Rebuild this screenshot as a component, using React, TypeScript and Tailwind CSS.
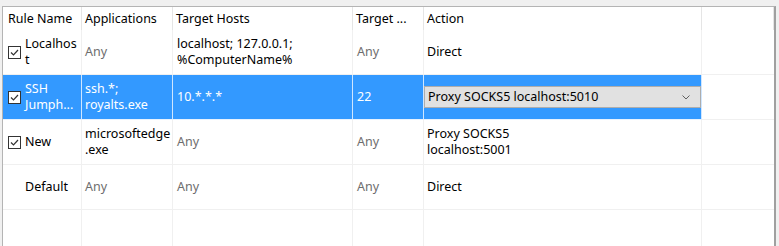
import React from "react";

const font = { fontFamily: '"Noto Sans", "Open Sans", sans-serif' };

function Check({ checked }: { checked: boolean }) {
  if (!checked) return <div className="w-[13px] h-[13px] shrink-0" />;
  return (
    <div className="w-[13px] h-[13px] shrink-0 border border-[#333333] bg-white flex items-center justify-center">
      <svg width="11" height="11" viewBox="0 0 11 11">
        <path d="M2 5.5 L4.5 8 L9 3" fill="none" stroke="#333" strokeWidth="1.2" />
      </svg>
    </div>
  );
}

type Cell = { lines: string[]; gray?: boolean };
type Row = {
  checked: boolean | null;
  name: string[];
  apps: Cell;
  hosts: Cell;
  port: Cell;
  action: Cell | "combo";
  selected?: boolean;
};

const rows: Row[] = [
  {
    checked: true,
    name: ["Localhos", "t"],
    apps: { lines: ["Any"], gray: true },
    hosts: { lines: ["localhost; 127.0.0.1;", "%ComputerName%"] },
    port: { lines: ["Any"], gray: true },
    action: { lines: ["Direct"] },
  },
  {
    checked: true,
    name: ["SSH", "Jumph..."],
    apps: { lines: ["ssh.*;", "royalts.exe"] },
    hosts: { lines: ["10.*.*.*"] },
    port: { lines: ["22"] },
    action: "combo",
    selected: true,
  },
  {
    checked: true,
    name: ["New"],
    apps: { lines: ["microsoftedge", ".exe"] },
    hosts: { lines: ["Any"], gray: true },
    port: { lines: ["Any"], gray: true },
    action: { lines: ["Proxy SOCKS5", "localhost:5001"] },
  },
  {
    checked: false,
    name: ["Default"],
    apps: { lines: ["Any"], gray: true },
    hosts: { lines: ["Any"], gray: true },
    port: { lines: ["Any"], gray: true },
    action: { lines: ["Direct"] },
  },
];

function Text({ c, sel }: { c: Cell; sel?: boolean }) {
  return (
    <div
      className={`leading-[16px] whitespace-nowrap ${
        sel ? "text-white" : c.gray ? "text-[#6d6d6d]" : "text-black"
      }`}
    >
      {c.lines.map((l, i) => (
        <div key={i}>{l}</div>
      ))}
    </div>
  );
}

export default function App() {
  const head = ["Rule Name", "Applications", "Target Hosts", "Target ...", "Action", ""];
  return (
    <div className="w-[779px] h-[246px] bg-[#f0f0f0] overflow-hidden text-[12.5px]" style={font}>
      <div className="ml-[2px] mt-[6px] w-[774px] h-[260px] bg-white border-l border-t border-[#b4b4b4] border-r-2 border-r-[#a0a0a0]">
        <div className="grid grid-cols-[79px_91px_180px_71px_278px_1fr] h-[23px]">
          {head.map((h, i) => (
            <div
              key={i}
              className={`flex items-center pt-[2px] border-r border-[#e5e5e5] ${
                i === 0 ? "pl-[5px]" : "pl-[3px]"
              } text-black whitespace-nowrap`}
            >
              {h}
            </div>
          ))}
        </div>
        {rows.map((r, ri) => {
          const sel = !!r.selected;
          const cellCls = `h-[45px] flex items-center border-b border-r ${
            sel ? "bg-[#3399ff] border-r-[#cfe6ff] border-b-[#e8f2ff]" : "border-[#f0f0f0]"
          }`;
          return (
            <div key={ri} className="grid grid-cols-[79px_91px_180px_71px_278px_1fr]">
              <div className={`${cellCls} pl-[5px] gap-[4px]`}>
                <Check checked={!!r.checked} />
                <div className={`leading-[16px] whitespace-nowrap ${sel ? "text-white" : "text-black"}`}>
                  {r.name.map((l, i) => (
                    <div key={i}>{l}</div>
                  ))}
                </div>
              </div>
              <div className={`${cellCls} pl-[3px]`}>
                <Text c={r.apps} sel={sel} />
              </div>
              <div className={`${cellCls} pl-[4px]`}>
                <Text c={r.hosts} sel={sel} />
              </div>
              <div className={`${cellCls} pl-[4px]`}>
                <Text c={r.port} sel={sel} />
              </div>
              <div className={`${cellCls} pl-[3px]`}>
                {r.action === "combo" ? (
                  <div className="w-[277px] h-[22px] -ml-[3px] border border-[#adadad] bg-[#e1e1e1] flex items-center justify-between pl-[3px] pr-[10px] text-black">
                    <span className="whitespace-nowrap">Proxy SOCKS5 localhost:5010</span>
                    <svg width="8" height="5" viewBox="0 0 8 5">
                      <path d="M0.5 0.5 L4 4 L7.5 0.5" fill="none" stroke="#606060" strokeWidth="1" />
                    </svg>
                  </div>
                ) : (
                  <Text c={r.action} />
                )}
              </div>
              <div className="h-[45px] border-b border-[#f0f0f0]" />
            </div>
          );
        })}
        <div className="grid grid-cols-[79px_91px_180px_71px_278px_1fr]">
          {[0, 1, 2, 3, 4].map((i) => (
            <div key={i} className="h-[45px] border-r border-b border-[#f0f0f0]" />
          ))}
          <div className="h-[45px]" />
        </div>
      </div>
    </div>
  );
}
